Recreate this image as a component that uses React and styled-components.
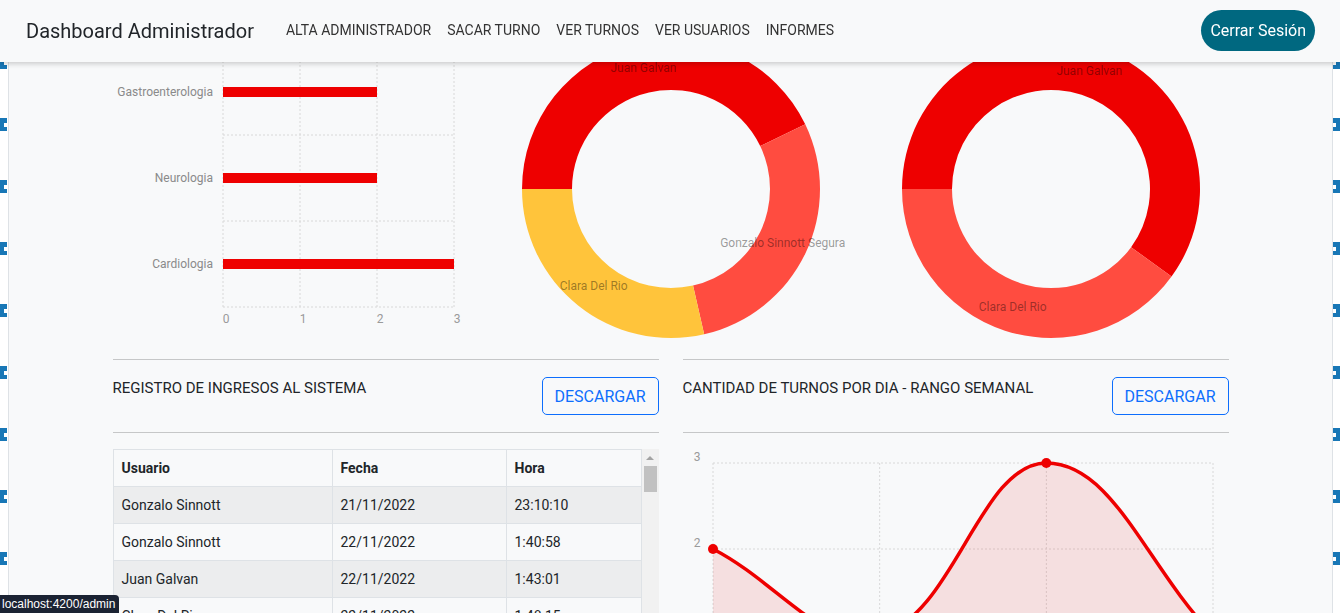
import React from "react";
import styled, { createGlobalStyle } from "styled-components";

const RED = "#ee0000";
const CORAL = "#ff4c40";
const YELLOW = "#ffc43b";

const especialidades = [
  { label: "Gastroenterologia", value: 2 },
  { label: "Neurologia", value: 2 },
  { label: "Cardiologia", value: 3 },
];

const turnosPorMedico = [
  { label: "Juan Galvan", value: 3, color: RED },
  { label: "Gonzalo Sinnott Segura", value: 2, color: CORAL },
  { label: "Clara Del Rio", value: 2, color: YELLOW },
];

const finalizadosPorMedico = [
  { label: "Juan Galvan", value: 3, color: RED },
  { label: "Clara Del Rio", value: 2, color: CORAL },
];

const turnosPorDia = [2, 1, 3, 1];

const ingresos = [
  ["Gonzalo Sinnott", "21/11/2022", "23:10:10"],
  ["Gonzalo Sinnott", "22/11/2022", "1:40:58"],
  ["Juan Galvan", "22/11/2022", "1:43:01"],
  ["Clara Del Rio", "22/11/2022", "1:48:15"],
  ["Gonzalo Sinnott", "22/11/2022", "1:52:40"],
  ["Juan Galvan", "22/11/2022", "2:05:12"],
];

const GlobalStyle = createGlobalStyle`
  html, body {
    margin: 0;
    padding: 0;
    background: #fff;
  }
  body {
    font-family: Roboto, "Noto Sans", Arial, sans-serif;
    color: #212529;
    overflow: hidden;
  }
`;

const Page = styled.div`
  min-height: 100vh;
  padding: 0 7px 0 8px;
  background-color: #fff;
  background-image: linear-gradient(to bottom, #fff 0 4px, transparent 4px),
    linear-gradient(to bottom, #fff 0 4px, transparent 4px),
    linear-gradient(to bottom, #1877b6 0 13px, transparent 13px),
    linear-gradient(to bottom, #1877b6 0 13px, transparent 13px);
  background-size: 3px 62px, 3px 62px, 7px 62px, 7px 62px;
  background-position: left 4px top -1px, right 4px top -1px, left 0 top -6px,
    right 0 top -6px;
  background-repeat: repeat-y;
`;

const Frame = styled.div`
  min-height: 100vh;
  background: #f8f9fa;
  border-left: 1px solid #dee2e6;
  border-right: 1px solid #dee2e6;
`;

const Navbar = styled.nav`
  position: fixed;
  top: 0;
  left: 0;
  right: 0;
  height: 62px;
  z-index: 10;
  display: flex;
  align-items: center;
  padding: 0 25px 0 26px;
  background: #f8f9fa;
  box-shadow: 0 2px 5px rgba(0, 0, 0, 0.18);
`;

const Brand = styled.a`
  font-size: 20px;
  color: #212529;
  margin-right: 24px;
  white-space: nowrap;
`;

const NavLinks = styled.ul`
  display: flex;
  list-style: none;
  margin: 0 0 2px;
  padding: 0;
  flex: 1;
`;

const NavLink = styled.li`
  padding: 0 8px;
  font-size: 14px;
  color: #333;
  text-transform: uppercase;
  white-space: nowrap;
`;

const LogoutButton = styled.button`
  height: 41px;
  padding: 0 9px;
  border: none;
  border-radius: 21px;
  background: #006880;
  color: #fff;
  font-family: inherit;
  font-size: 16px;
  margin-bottom: 1px;
`;

const Container = styled.main`
  width: 1140px;
  margin: 0 auto;
  padding: 39px 12px 0;
  box-sizing: border-box;
`;

const ChartsRow = styled.div`
  display: grid;
  grid-template-columns: repeat(3, 1fr);
  column-gap: 24px;
  height: 300px;
  margin-bottom: 20px;
`;

const BottomRow = styled.div`
  display: grid;
  grid-template-columns: 1fr 1fr;
  column-gap: 24px;
`;

const Column = styled.section`
  min-width: 0;
`;

const Divider = styled.hr`
  margin: 0;
  border: 0;
  border-top: 1px solid #c6c7c8;
`;

const SectionHeader = styled.div`
  display: flex;
  justify-content: space-between;
  align-items: flex-start;
  padding: 17px 0;
`;

const SectionTitle = styled.h5`
  margin: 0;
  font-size: 15px;
  line-height: 22px;
  font-weight: 400;
  text-transform: uppercase;
`;

const OutlineButton = styled.button`
  height: 38px;
  padding: 0 12px;
  background: transparent;
  border: 1px solid #0d6efd;
  border-radius: 5px;
  color: #0d6efd;
  font-family: inherit;
  font-size: 16px;
`;

const SectionBody = styled.div`
  margin-top: 16px;
`;

const TableBox = styled.div`
  display: flex;
  height: 250px;
`;

const TableViewport = styled.div`
  flex: 1;
  min-width: 0;
  overflow: hidden;
`;

const ScrollTrack = styled.div`
  width: 17px;
  flex-shrink: 0;
  background: #f1f1f1;
  display: flex;
  flex-direction: column;
  align-items: center;
`;

const ScrollArrow = styled.div`
  height: 17px;
  display: flex;
  align-items: center;
  justify-content: center;

  &::before {
    content: "";
    border-left: 4px solid transparent;
    border-right: 4px solid transparent;
    border-bottom: 4px solid #a3a3a3;
  }
`;

const ScrollThumb = styled.div`
  width: 13px;
  height: 26px;
  background: #c1c1c1;
`;

const Table = styled.table`
  width: 100%;
  table-layout: fixed;
  border-collapse: collapse;
  font-size: 14px;
  line-height: 20px;
`;

const Th = styled.th`
  width: ${(p) => p.$w || "auto"};
  text-align: left;
  font-weight: 700;
  padding: 8px;
  border: 1px solid #dee2e6;
`;

const Tr = styled.tr`
  background: ${(p) => (p.$striped ? "#ecedee" : "transparent")};
`;

const Td = styled.td`
  padding: 8px;
  border: 1px solid #dee2e6;
  white-space: nowrap;
`;

const ChartSvg = styled.svg`
  display: block;
  font-family: Roboto, "Noto Sans", Arial, sans-serif;
`;

const StatusBubble = styled.div`
  position: fixed;
  left: 0;
  bottom: 0;
  padding: 1px 4px 1px 2px;
  background: #1b2333;
  color: #fff;
  font-family: "Liberation Sans", Arial, sans-serif;
  font-size: 12px;
  line-height: 16px;
  border-top-right-radius: 4px;
  z-index: 20;
`;

function BarChart({ data }) {
  const x0 = 110;
  const step = 77;
  const gridX = [0, 1, 2, 3].map((i) => x0 + i * step);
  const gridY = [10, 96, 182, 268];
  return (
    <ChartSvg width="356" height="300">
      {gridX.map((x) => (
        <line key={"v" + x} x1={x} y1={10} x2={x} y2={268} stroke="#d8d8d8" strokeDasharray="2 2" />
      ))}
      {gridY.map((y) => (
        <line key={"h" + y} x1={x0} y1={y} x2={gridX[3]} y2={y} stroke="#d8d8d8" strokeDasharray="2 2" />
      ))}
      {data.map((d, i) => {
        const cy = 53 + i * 86;
        return (
          <g key={d.label}>
            <rect x={x0} y={cy - 5} width={d.value * step} height="10" fill={RED} />
            <text x="100" y={cy + 4} textAnchor="end" fontSize="12" fill="#8a8a8a">
              {d.label}
            </text>
          </g>
        );
      })}
      {gridX.map((x, i) => (
        <text key={"l" + i} x={x + 3} y="284" textAnchor="middle" fontSize="12" fill="#9a9a9a">
          {i}
        </text>
      ))}
    </ChartSvg>
  );
}

function arcPath(cx, cy, R, r, a0, a1) {
  const rad = (d) => (d * Math.PI) / 180;
  const pt = (rr, a) => [cx + rr * Math.cos(rad(a)), cy + rr * Math.sin(rad(a))];
  const large = a1 - a0 > 180 ? 1 : 0;
  const [x1, y1] = pt(R, a0);
  const [x2, y2] = pt(R, a1);
  const [x3, y3] = pt(r, a1);
  const [x4, y4] = pt(r, a0);
  return `M${x1} ${y1} A${R} ${R} 0 ${large} 1 ${x2} ${y2} L${x3} ${y3} A${r} ${r} 0 ${large} 0 ${x4} ${y4}Z`;
}

function DonutChart({ data }) {
  const cx = 178;
  const cy = 150;
  const total = data.reduce((s, d) => s + d.value, 0);
  let angle = 180;
  const slices = data.map((d) => {
    const a0 = angle;
    const a1 = angle + (d.value / total) * 360;
    angle = a1;
    const mid = ((a0 + a1) / 2) * (Math.PI / 180);
    return { ...d, a0, a1, lx: cx + 124 * Math.cos(mid), ly: cy + 124 * Math.sin(mid) };
  });
  return (
    <ChartSvg width="356" height="300">
      {slices.map((s) => (
        <path key={s.label} d={arcPath(cx, cy, 149, 99, s.a0, s.a1)} fill={s.color} />
      ))}
      {slices.map((s) => (
        <text
          key={"t" + s.label}
          x={s.lx}
          y={s.ly + 4}
          textAnchor="middle"
          fontSize="12"
          fill="#000"
          fillOpacity="0.4"
        >
          {s.label}
        </text>
      ))}
    </ChartSvg>
  );
}

function splinePath(pts, t = 0.4) {
  const cps = pts.map((p, i) => {
    const prev = pts[i - 1] || p;
    const next = pts[i + 1] || p;
    const d01 = Math.hypot(p[0] - prev[0], p[1] - prev[1]);
    const d12 = Math.hypot(next[0] - p[0], next[1] - p[1]);
    const s01 = d01 / (d01 + d12) || 0;
    const s12 = d12 / (d01 + d12) || 0;
    const dx = next[0] - prev[0];
    const dy = next[1] - prev[1];
    return {
      in: [p[0] - t * s01 * dx, p[1] - t * s01 * dy],
      out: [p[0] + t * s12 * dx, p[1] + t * s12 * dy],
    };
  });
  let d = `M${pts[0][0]} ${pts[0][1]}`;
  for (let i = 1; i < pts.length; i++) {
    const a = cps[i - 1].out;
    const b = cps[i].in;
    d += ` C${a[0]} ${a[1]} ${b[0]} ${b[1]} ${pts[i][0]} ${pts[i][1]}`;
  }
  return d;
}

function LineChart({ data }) {
  const left = 30;
  const right = 530;
  const top = 14;
  const unit = 86;
  const yOf = (v) => top + (3 - v) * unit;
  const stepX = (right - left) / (data.length - 1);
  const pts = data.map((v, i) => [left + i * stepX, yOf(v)]);
  const line = splinePath(pts);
  const bottom = yOf(0);
  const gridX = data.map((_, i) => left + i * stepX);
  return (
    <ChartSvg width="546" height="300">
      {gridX.map((x) => (
        <line key={"v" + x} x1={x} y1={top} x2={x} y2={bottom} stroke="#d8d8d8" strokeDasharray="2 2" />
      ))}
      {[3, 2, 1].map((v) => (
        <line key={"h" + v} x1={left} y1={yOf(v)} x2={right} y2={yOf(v)} stroke="#d8d8d8" strokeDasharray="2 2" />
      ))}
      {[3, 2, 1].map((v) => (
        <text key={"y" + v} x="14" y={yOf(v) - 2} textAnchor="middle" fontSize="12" fill="#9a9a9a">
          {v}
        </text>
      ))}
      <path d={`${line} L${right} ${bottom} L${left} ${bottom}Z`} fill="rgba(225, 0, 0, 0.1)" />
      <path d={line} fill="none" stroke={RED} strokeWidth="3.5" />
      {pts.map(([x, y]) => (
        <circle key={"p" + x} cx={x} cy={y} r="5" fill={RED} />
      ))}
    </ChartSvg>
  );
}

function App() {
  return (
    <>
      <GlobalStyle />
      <Page>
        <Frame>
          <Navbar>
            <Brand>Dashboard Administrador</Brand>
            <NavLinks>
              <NavLink>Alta Administrador</NavLink>
              <NavLink>Sacar Turno</NavLink>
              <NavLink>Ver Turnos</NavLink>
              <NavLink>Ver Usuarios</NavLink>
              <NavLink>Informes</NavLink>
            </NavLinks>
            <LogoutButton>Cerrar Sesión</LogoutButton>
          </Navbar>

          <Container>
            <ChartsRow>
              <BarChart data={especialidades} />
              <DonutChart data={turnosPorMedico} />
              <DonutChart data={finalizadosPorMedico} />
            </ChartsRow>

            <BottomRow>
              <Column>
                <Divider />
                <SectionHeader>
                  <SectionTitle>Registro de ingresos al sistema</SectionTitle>
                  <OutlineButton>DESCARGAR</OutlineButton>
                </SectionHeader>
                <Divider />
                <SectionBody>
                  <TableBox>
                    <TableViewport>
                      <Table>
                        <thead>
                          <tr>
                            <Th $w="202px">Usuario</Th>
                            <Th $w="157px">Fecha</Th>
                            <Th>Hora</Th>
                          </tr>
                        </thead>
                        <tbody>
                          {ingresos.map((row, i) => (
                            <Tr key={i} $striped={i % 2 === 0}>
                              <Td>{row[0]}</Td>
                              <Td>{row[1]}</Td>
                              <Td>{row[2]}</Td>
                            </Tr>
                          ))}
                        </tbody>
                      </Table>
                    </TableViewport>
                    <ScrollTrack>
                      <ScrollArrow />
                      <ScrollThumb />
                    </ScrollTrack>
                  </TableBox>
                </SectionBody>
              </Column>

              <Column>
                <Divider />
                <SectionHeader>
                  <SectionTitle>Cantidad de turnos por dia - rango semanal</SectionTitle>
                  <OutlineButton>DESCARGAR</OutlineButton>
                </SectionHeader>
                <Divider />
                <SectionBody>
                  <LineChart data={turnosPorDia} />
                </SectionBody>
              </Column>
            </BottomRow>
          </Container>
        </Frame>
      </Page>
      <StatusBubble>localhost:4200/admin</StatusBubble>
    </>
  );
}

export default App;
